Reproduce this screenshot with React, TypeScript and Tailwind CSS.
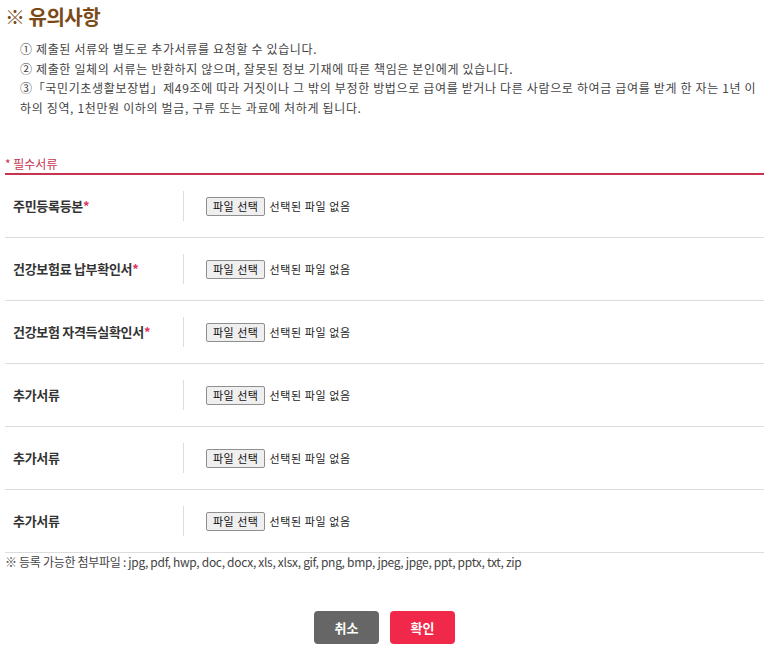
import React from "react";

const rows = [
  { label: "주민등록등본", req: true },
  { label: "건강보험료 납부확인서", req: true },
  { label: "건강보험 자격득실확인서", req: true },
  { label: "추가서류", req: false },
  { label: "추가서류", req: false },
  { label: "추가서류", req: false },
];

export default function App() {
  return (
    <div
      className="w-[769px] min-h-[666px] bg-white text-[#444] px-[5px]"
      style={{ fontFamily: '"Noto Sans CJK KR", "Noto Sans", sans-serif' }}
    >
      <h2 className="pt-[3px] text-[20px] leading-[28px] font-bold text-[#7b4a17] tracking-[-0.5px]">
        ※ 유의사항
      </h2>
      <ul className="mt-[8px] pl-[15px] text-[12px] leading-[19.5px] text-[#444] tracking-[0.65px]">
        <li>① 제출된 서류와 별도로 추가서류를 요청할 수 있습니다.</li>
        <li>② 제출한 일체의 서류는 반환하지 않으며, 잘못된 정보 기재에 따른 책임은 본인에게 있습니다.</li>
        <li className="whitespace-nowrap">
          ③「국민기초생활보장법」제49조에 따라 거짓이나 그 밖의 부정한 방법으로 급여를 받거나 다른 사람으로 하여금 급여를 받게 한 자는 1년 이
          <br />
          하의 징역, 1천만원 이하의 벌금, 구류 또는 과료에 처하게 됩니다.
        </li>
      </ul>

      <div className="mt-[38px] text-[12px] leading-[18px] text-[#c8344f] border-b-2 border-[#c8344f]">
        * 필수서류
      </div>

      <div>
        {rows.map((r, i) => (
          <div key={i} className="flex items-center h-[63px] border-b border-[#dcdcdc]">
            <div className="w-[178px] pl-[8px] text-[13px] font-bold text-[#333] tracking-[-0.3px]">
              {r.label}
              {r.req && <span className="text-[#e0335a]">*</span>}
            </div>
            <div className="w-px h-[30px] bg-[#dddddd]" />
            <div className="flex items-center pl-[22px]">
              <span className="inline-flex items-center h-[19px] px-[6px] border border-[#8f8f8f] rounded-[2px] bg-[#efefef] text-[11px] text-[#111] leading-none tracking-[0.5px]">
                파일 선택
              </span>
              <span className="ml-[4px] text-[11px] text-[#222] tracking-[0.6px]">선택된 파일 없음</span>
            </div>
          </div>
        ))}
      </div>

      <p className="mt-0 text-[12px] leading-[18px] text-[#444] tracking-[-0.3px]">
        ※ 등록 가능한 첨부파일 : jpg, pdf, hwp, doc, docx, xls, xlsx, gif, png, bmp, jpeg, jpge, ppt, pptx, txt, zip
      </p>

      <div className="flex justify-center gap-[11px] mt-[40px]">
        <button className="w-[65px] h-[33px] rounded-[4px] bg-[#666666] text-white text-[13px] font-bold">
          취소
        </button>
        <button className="w-[65px] h-[33px] rounded-[4px] bg-[#f0284a] text-white text-[13px] font-bold">
          확인
        </button>
      </div>
    </div>
  );
}
